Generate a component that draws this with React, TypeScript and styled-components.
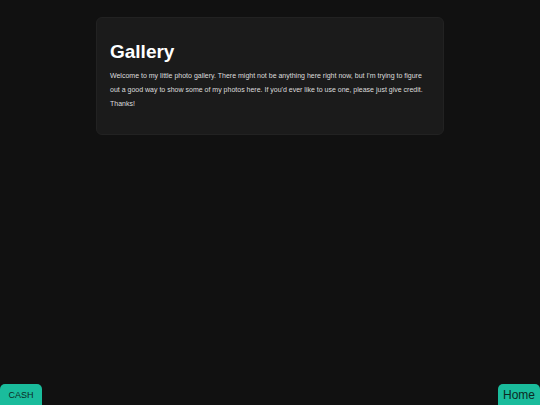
import React from 'react'
import styled, { createGlobalStyle } from 'styled-components'

const Global = createGlobalStyle`
  html, body {
    margin: 0;
    padding: 0;
    background: #111111;
    font-family: "Liberation Sans", Arial, sans-serif;
  }
`

const Page = styled.div`
  min-height: 405px;
  display: flex;
  flex-direction: column;
  align-items: center;
  padding-top: 17px;
  box-sizing: border-box;
`

const Card = styled.div`
  width: 348px;
  box-sizing: border-box;
  background: #1b1b1b;
  border: 1px solid #222222;
  border-radius: 6px;
  padding: 23px 13px 23px 13px;
`

const Title = styled.h1`
  margin: 0 0 6px 0;
  color: #ffffff;
  font-size: 19px;
  font-weight: 700;
  line-height: 22px;
`

const Text = styled.p`
  margin: 0;
  color: #dddddd;
  font-size: 7px;
  line-height: 14px;
`

interface CornerProps {
  side: 'left' | 'right'
  big?: boolean
}

const CornerButton = styled.button<CornerProps>`
  position: fixed;
  bottom: 0;
  ${p => (p.side === 'left' ? 'left: 0;' : 'right: 0;')}
  width: 42px;
  height: 21px;
  border: none;
  border-radius: 5px 5px 0 0;
  background: #1abc9c;
  color: #0c2a24;
  font-family: "Liberation Sans", Arial, sans-serif;
  font-size: ${p => (p.big ? '12px' : '9px')};
  padding: 0;
  display: flex;
  align-items: center;
  justify-content: center;
`

export default function App() {
  return (
    <>
      <Global />
      <Page>
        <Card>
          <Title>Gallery</Title>
          <Text>
            Welcome to my little photo gallery. There might not be anything here right now, but I'm trying to figure
            out a good way to show some of my photos here. If you'd ever like to use one, please just give credit.
            Thanks!
          </Text>
        </Card>
      </Page>
      <CornerButton side="left">CASH</CornerButton>
      <CornerButton side="right" big>Home</CornerButton>
    </>
  )
}
